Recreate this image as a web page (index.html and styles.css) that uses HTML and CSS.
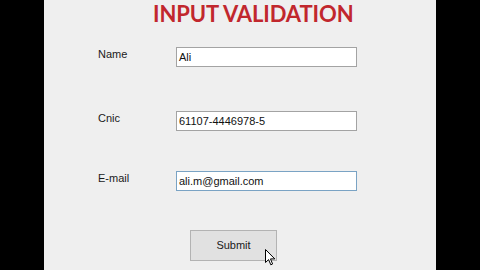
FILE: index.html
```html
<!DOCTYPE html>
<html>
<head>
<meta charset="utf-8">
<link rel="stylesheet" href="styles.css">
</head>
<body>
<div class="stage">
  <div class="panel">
    <h1 class="title">INPUT VALIDATION</h1>
    <div class="form">
      <div class="row row-name">
        <span class="label">Name</span>
        <div class="field">Ali</div>
      </div>
      <div class="row row-cnic">
        <span class="label">Cnic</span>
        <div class="field">61107-4446978-5</div>
      </div>
      <div class="row row-email">
        <span class="label">E-mail</span>
        <div class="field focused">ali.m@gmail.com</div>
      </div>
    </div>
    <div class="actions">
      <div class="button">Submit
        <svg class="cursor" width="11" height="17" viewBox="0 0 11 17">
          <path d="M0.5 0.5 L0.5 13.5 L3.6 10.6 L5.8 15.8 L7.6 15 L5.5 9.9 L9.8 9.9 Z" fill="#ffffff" stroke="#000000" stroke-width="1" stroke-linejoin="round"/>
        </svg>
      </div>
    </div>
  </div>
</div>
</body>
</html>
```
FILE: styles.css
```css
html, body {
  margin: 0;
  padding: 0;
  background: #000;
}
.stage {
  width: 480px;
  height: 270px;
  display: flex;
  padding-left: 44px;
  box-sizing: border-box;
}
.panel {
  width: 392px;
  height: 270px;
  background: #efefef;
  font-family: "Liberation Sans", Arial, sans-serif;
  font-size: 11px;
  color: #1a1a1a;
  overflow: hidden;
}
.title {
  margin: 0;
  padding-left: 109px;
  padding-top: 0;
  height: 28px;
  line-height: 28px;
  font-family: "Lato", "Liberation Sans", sans-serif;
  font-weight: 700;
  font-size: 22px;
  color: #c1272d;
  letter-spacing: -0.1px;
}
.form {
  display: flex;
  flex-direction: column;
  padding-left: 54px;
}
.row {
  display: flex;
  align-items: flex-start;
}
.row-name { margin-top: 19px; }
.row-cnic { margin-top: 44px; }
.row-email { margin-top: 40px; }
.label {
  width: 78px;
  line-height: 13px;
  padding-top: 1px;
}
.field {
  width: 181px;
  height: 20px;
  box-sizing: border-box;
  background: #fff;
  border: 1px solid #a3a3a3;
  padding-left: 2px;
  line-height: 18px;
  font-size: 11px;
  color: #111;
}
.field.focused {
  border-color: #7aa3c4;
}
.actions {
  padding-left: 146px;
  margin-top: 39px;
}
.button {
  position: relative;
  width: 87px;
  height: 31px;
  box-sizing: border-box;
  background: #e1e1e1;
  border: 1px solid #b3b3b3;
  text-align: center;
  line-height: 29px;
  font-size: 11px;
  color: #1a1a1a;
}
.cursor {
  position: absolute;
  left: 74px;
  top: 18px;
}
```
